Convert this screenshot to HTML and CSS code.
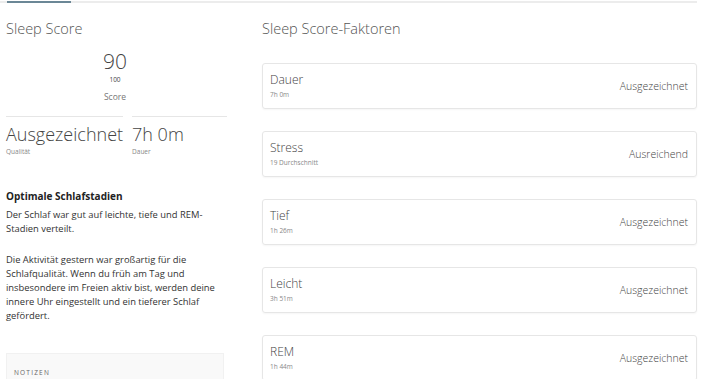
FILE: index.html
```html
<!DOCTYPE html>
<html lang="de">
<head>
    <meta charset="UTF-8">
    <meta name="viewport" content="width=device-width, initial-scale=1.0">
    <title>Sleep Score</title>
    <link rel="stylesheet" href="styles.css">
</head>
<body>
    <div class="tabs"><span class="tab-active"></span></div>

    <div class="page">
        <div class="left">
            <h2 class="title">Sleep Score</h2>

            <div class="score">
                <div class="score-value">90</div>
                <div class="score-max">100</div>
                <div class="score-label">Score</div>
            </div>

            <div class="stats">
                <div class="stat stat-wide">
                    <div class="stat-value">Ausgezeichnet</div>
                    <div class="stat-label">Qualität</div>
                </div>
                <div class="stat">
                    <div class="stat-value">7h 0m</div>
                    <div class="stat-label">Dauer</div>
                </div>
            </div>

            <h3 class="insight-title">Optimale Schlafstadien</h3>
            <p class="insight">Der Schlaf war gut auf leichte, tiefe und REM-Stadien verteilt.</p>
            <p class="insight">Die Aktivität gestern war großartig für die Schlafqualität. Wenn du früh am Tag und insbesondere im Freien aktiv bist, werden deine innere Uhr eingestellt und ein tieferer Schlaf gefördert.</p>

            <div class="notes">NOTIZEN</div>
        </div>

        <div class="right">
            <h2 class="title">Sleep Score-Faktoren</h2>

            <div class="factor">
                <div>
                    <div class="factor-name">Dauer</div>
                    <div class="factor-detail">7h 0m</div>
                </div>
                <div class="factor-rating">Ausgezeichnet</div>
            </div>
            <div class="factor">
                <div>
                    <div class="factor-name">Stress</div>
                    <div class="factor-detail">19 Durchschnitt</div>
                </div>
                <div class="factor-rating">Ausreichend</div>
            </div>
            <div class="factor">
                <div>
                    <div class="factor-name">Tief</div>
                    <div class="factor-detail">1h 26m</div>
                </div>
                <div class="factor-rating">Ausgezeichnet</div>
            </div>
            <div class="factor">
                <div>
                    <div class="factor-name">Leicht</div>
                    <div class="factor-detail">3h 51m</div>
                </div>
                <div class="factor-rating">Ausgezeichnet</div>
            </div>
            <div class="factor">
                <div>
                    <div class="factor-name">REM</div>
                    <div class="factor-detail">1h 44m</div>
                </div>
                <div class="factor-rating">Ausgezeichnet</div>
            </div>
        </div>
    </div>
</body>
</html>
```

FILE: styles.css
```css
body { margin: 0; font-family: "Open Sans", "Noto Sans", sans-serif; color: #444; background: #fff; overflow: hidden; }

.tabs { height: 2px; margin: 1px 16px 0 0; background: #ececec; }
.tab-active { display: block; width: 64px; height: 2px; margin-left: 7px; background: #6b8796; }

.page { display: grid; grid-template-columns: 218px 435px; column-gap: 38px; padding: 0 6px; }

.title { margin: 16px 0 0; font-size: 14.5px; font-weight: 300; color: #555; }

.score { text-align: center; margin-top: 10px; color: #444; }
.score-value { font-size: 21px; font-weight: 300; line-height: 26px; }
.score-max { font-size: 6.5px; line-height: 8px; margin-top: 2px; }
.score-label { font-size: 8.5px; line-height: 12px; margin-top: 7px; color: #777; }

.stats { display: flex; gap: 9px; margin-top: 13px; }
.stat { flex: 0 0 95px; border-top: 1px solid #e6e6e6; padding-top: 4px; }
.stat-wide { flex: 0 0 114px; }
.stat-value { font-size: 18px; font-weight: 300; line-height: 26px; color: #444; }
.stat-label { font-size: 6.5px; line-height: 10px; color: #888; }

.insight-title { margin: 32px 0 0; font-size: 10px; font-weight: 700; color: #222; }
.insight { margin: 5px 0 0; font-size: 9.4px; line-height: 14px; color: #333; }
.insight + .insight { margin-top: 17px; }

.notes { margin-top: 30px; padding: 14px 7px 12px; background: #f9f9f9; border: 1px solid #f1f1f1; font-size: 6.5px; letter-spacing: 1.2px; color: #666; }

.factor { display: flex; justify-content: space-between; align-items: center; height: 44px; padding: 0 8px 0 7px; margin-top: 22px; border: 1px solid #e6e6e6; border-radius: 3px; box-shadow: 0 1px 2px rgba(0,0,0,0.04); }
.right .title + .factor { margin-top: 25px; }
.factor-name { font-size: 12px; font-weight: 300; line-height: 17px; color: #444; }
.factor-detail { font-size: 6.5px; line-height: 14px; color: #888; }
.factor-rating { font-size: 10.5px; font-weight: 300; color: #444; }
```
